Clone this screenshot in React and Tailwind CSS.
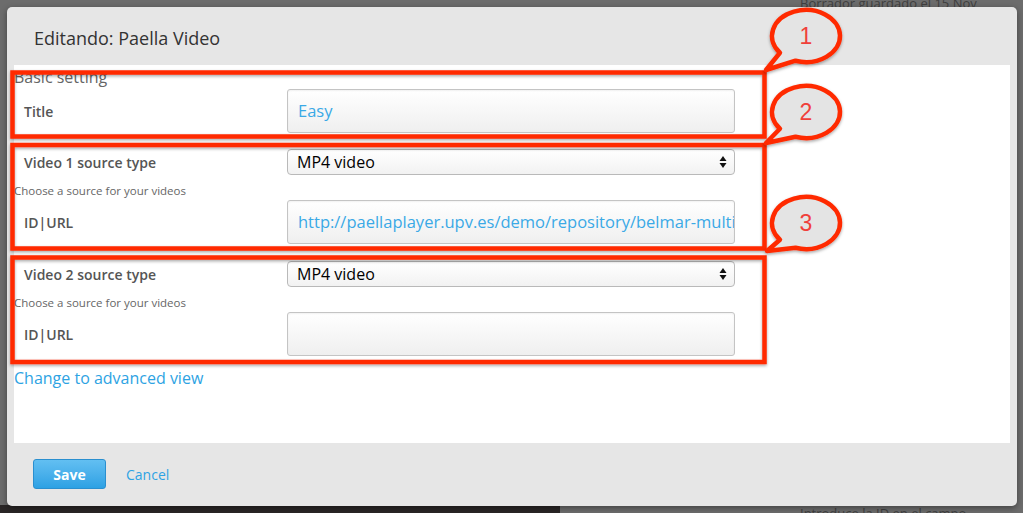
import React from 'react';

const font = { fontFamily: '"Open Sans", "Liberation Sans", sans-serif' };

const Field = ({ value }) => (
    <div className="w-[448px] h-[44px] border border-[#c4c4c4] rounded-[3px] bg-gradient-to-b from-white to-[#efefef] shadow-[inset_0_1px_2px_rgba(0,0,0,0.06)] flex items-center pl-[10px] overflow-hidden whitespace-nowrap">
        <span className="text-[16.5px] text-[#3aa9e6]">{value}</span>
    </div>
);

const Select = () => (
    <div className="w-[448px] h-[26px] border border-[#b9b9b9] rounded-[4px] bg-gradient-to-b from-white to-[#f2f2f2] flex items-center justify-between pl-[9px] pr-[7px]">
        <span className="text-[16px] text-black">MP4 video</span>
        <svg width="8" height="14" viewBox="0 0 8 14">
            <path d="M4 1 L7.5 6 L0.5 6 Z" fill="#111" />
            <path d="M4 13 L7.5 8 L0.5 8 Z" fill="#111" />
        </svg>
    </div>
);

const Row = ({ label, children }) => (
    <div className="flex items-center">
        <div className="w-[273px] pl-[10px] text-[14px] font-semibold text-[#555]">{label}</div>
        {children}
    </div>
);

const Bubble = ({ cx, cy, tx, ty, n }) => {
    // bubble outline: long arc round the ellipse, then the tail to the tip
    const rx = 34;
    const ry = 26;
    const a1 = (220 * Math.PI) / 180;
    const a2 = (252 * Math.PI) / 180;
    const p1 = [cx + rx * Math.cos(a1), cy - ry * Math.sin(a1)];
    const p2 = [cx + rx * Math.cos(a2), cy - ry * Math.sin(a2)];
    return (
        <g>
            <path
                d={`M${p2[0]} ${p2[1]} A${rx} ${ry} 0 1 0 ${p1[0]} ${p1[1]} L${tx} ${ty} Z`}
                fill="#e4e4e4"
                stroke="#ff2a00"
                strokeWidth="4.5"
                strokeLinejoin="round"
                filter="url(#sh)"
            />
            <text x={cx} y={cy + 8} textAnchor="middle" fontSize="23" fill="#f0403a" fontFamily="Liberation Sans, sans-serif">
                {n}
            </text>
        </g>
    );
};

const Annotations = () => (
    <svg className="absolute inset-0 pointer-events-none" width="1023" height="513">
        <defs>
            <filter id="sh" x="-10%" y="-10%" width="120%" height="130%">
                <feDropShadow dx="0" dy="1.5" stdDeviation="1.5" floodColor="#000" floodOpacity="0.35" />
            </filter>
        </defs>
        <rect x="12.5" y="72.5" width="752" height="64" fill="none" stroke="#ff2a00" strokeWidth="4.5" filter="url(#sh)" />
        <rect x="12.5" y="145" width="752" height="103.5" fill="none" stroke="#ff2a00" strokeWidth="4.5" filter="url(#sh)" />
        <rect x="12.5" y="257.5" width="752" height="104.5" fill="none" stroke="#ff2a00" strokeWidth="4.5" filter="url(#sh)" />
        <Bubble cx={806} cy={36} tx={766} ty={70} n="1" />
        <Bubble cx={806} cy={112} tx={766} ty={143} n="2" />
        <Bubble cx={806} cy={223} tx={767} ty={251} n="3" />
    </svg>
);

const App = () => {
    return (
        <div className="relative w-[1023px] h-[513px] overflow-hidden bg-[#6c6c6c]" style={font}>
            {/* page behind the dialog */}
            <div className="absolute top-[-6px] left-[800px] text-[13px] text-[#3f3f3f] whitespace-nowrap">Borrador guardado el 15 Nov</div>
            <div className="absolute top-[504px] left-[800px] text-[13px] text-[#3f3f3f] whitespace-nowrap">Introduce la ID en el campo</div>
            <div className="absolute left-0 top-[505px] w-[560px] h-[8px] bg-[#2a2626]"></div>

            <div className="relative pt-[7px] pl-[7px]">
                {/* Dialog */}
                <div className="w-[1010px] h-[499px] rounded-[5px] bg-[#e6e6e6] shadow-[0_2px_6px_rgba(0,0,0,0.4)] flex flex-col">
                    <div className="h-[58px] flex items-center pl-[27px] pt-[4px]">
                        <h1 className="text-[18px] text-[#333]">Editando: Paella Video</h1>
                    </div>

                    <div className="mx-[7px] h-[378px] bg-white flex flex-col">
                        <div className="h-[22px] leading-[22px] text-[16px] text-[#666] mt-[1px]">Basic setting</div>
                        <div className="mt-[1px]">
                            <Row label="Title">
                                <Field value="Easy" />
                            </Row>
                        </div>
                        <div className="mt-[16px]">
                            <Row label="Video 1 source type">
                                <Select />
                            </Row>
                        </div>
                        <div className="mt-[8px] h-[16px] leading-[16px] text-[11.5px] text-[#666]">Choose a source for your videos</div>
                        <div className="mt-[1px]">
                            <Row label="ID|URL">
                                <Field value="http://paellaplayer.upv.es/demo/repository/belmar-multiresolution" />
                            </Row>
                        </div>
                        <div className="mt-[17px]">
                            <Row label="Video 2 source type">
                                <Select />
                            </Row>
                        </div>
                        <div className="mt-[8px] h-[16px] leading-[16px] text-[11.5px] text-[#666]">Choose a source for your videos</div>
                        <div className="mt-[1px]">
                            <Row label="ID|URL">
                                <Field value="" />
                            </Row>
                        </div>
                        <div className="mt-[11px] h-[22px] leading-[22px]">
                            <a className="text-[16px] text-[#2ea3e3]">Change to advanced view</a>
                        </div>
                    </div>

                    {/* Footer */}
                    <div className="flex items-center pl-[26px] mt-[16px] gap-[20px]">
                        <button className="w-[73px] h-[30px] rounded-[3px] border border-[#2a8fcf] bg-gradient-to-b from-[#62bff2] to-[#2ca1e4] text-white text-[14px] font-bold">
                            Save
                        </button>
                        <a className="text-[14px] text-[#2ea3e3]">Cancel</a>
                    </div>
                </div>
            </div>

            <Annotations />
        </div>
    );
};

export default App;
